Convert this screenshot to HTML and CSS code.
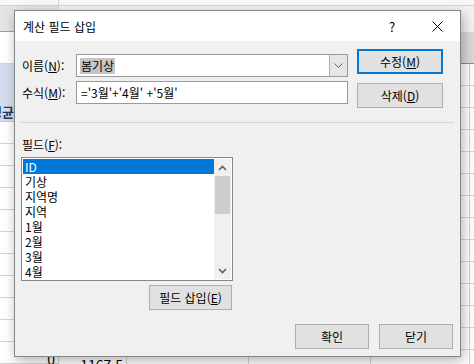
FILE: index.html
```html
<!DOCTYPE html>
<html lang="ko">
<head>
  <meta charset="UTF-8">
  <title>계산 필드 삽입</title>
  <link rel="stylesheet" href="styles.css">
</head>
<body>
  <!-- 뒤쪽 시트 -->
  <div class="sheet">
    <div class="pane-left">
      <div class="hd0"></div>
      <div class="hd1"></div>
      <div class="hd2"></div>
      <div class="sel-head"><span>평균</span></div>
      <div class="row"></div>
      <div class="row"></div>
      <div class="row"></div>
      <div class="row"></div>
      <div class="row"></div>
      <div class="row"></div>
      <div class="row"></div>
      <div class="row"></div>
      <div class="row"></div>
      <div class="row"></div>
      <div class="row num">0</div>
    </div>
    <div class="pane-right">
      <div class="hd0"></div>
      <div class="hd1"></div>
      <div class="hd2"></div>
      <div class="row"></div>
      <div class="row"></div>
      <div class="row"></div>
      <div class="row"></div>
      <div class="row"></div>
      <div class="row"></div>
      <div class="row"></div>
      <div class="row"></div>
      <div class="row"></div>
      <div class="row"></div>
      <div class="row"></div>
      <div class="row"></div>
      <div class="row"></div>
      <div class="row"><span class="cell-num">1167.5</span></div>
    </div>
  </div>

  <!-- 대화상자 -->
  <div class="dialog">
    <div class="titlebar">
      <span class="title">계산 필드 삽입</span>
      <span class="help">?</span>
      <span class="close">
        <svg width="11" height="11" viewBox="0 0 11 11"><path d="M0.5 0.5 L10.5 10.5 M10.5 0.5 L0.5 10.5" stroke="#000" stroke-width="1" fill="none"/></svg>
      </span>
    </div>

    <div class="content">
      <div class="top">
        <div class="fields">
          <div class="field">
            <label>이름(<u>N</u>):</label>
            <div class="combo">
              <span class="combo-text"><span class="hl">봄기상</span></span>
              <span class="combo-btn">
                <svg width="9" height="5" viewBox="0 0 9 5"><path d="M0.5 0.5 L4.5 4.5 L8.5 0.5" stroke="#606060" stroke-width="1" fill="none"/></svg>
              </span>
            </div>
          </div>
          <div class="field">
            <label>수식(<u>M</u>):</label>
            <div class="textbox">='3월'+'4월' +'5월'</div>
          </div>
        </div>
        <div class="side-buttons">
          <button class="btn btn-focus">수정(<u>M</u>)</button>
          <button class="btn">삭제(<u>D</u>)</button>
        </div>
      </div>

      <div class="separator"></div>

      <div class="list-label">필드(<u>F</u>):</div>
      <div class="listbox">
        <div class="items">
          <div class="item selected">ID</div>
          <div class="item">기상</div>
          <div class="item">지역명</div>
          <div class="item">지역</div>
          <div class="item">1월</div>
          <div class="item">2월</div>
          <div class="item">3월</div>
          <div class="item">4월</div>
        </div>
        <div class="scrollbar">
          <div class="arrow">
            <svg width="9" height="6" viewBox="0 0 9 6"><path d="M1 5 L4.5 1.5 L8 5" stroke="#606060" stroke-width="1.6" fill="none"/></svg>
          </div>
          <div class="thumb"></div>
          <div class="track"></div>
          <div class="arrow">
            <svg width="9" height="6" viewBox="0 0 9 6"><path d="M1 1 L4.5 4.5 L8 1" stroke="#606060" stroke-width="1.6" fill="none"/></svg>
          </div>
        </div>
      </div>

      <button class="btn btn-insert">필드 삽입(<u>E</u>)</button>

      <div class="footer-buttons">
        <button class="btn btn-wide">확인</button>
        <button class="btn btn-wide">닫기</button>
      </div>
    </div>
  </div>
</body>
</html>
```

FILE: styles.css
```css
* {
  box-sizing: border-box;
}

body {
  margin: 0;
  width: 474px;
  height: 364px;
  overflow: hidden;
  position: relative;
  font-family: "Noto Sans CJK KR", "Noto Sans", sans-serif;
  font-size: 12px;
  color: #000;
  background-color: #fff;
}

/* 시트 배경 */
.sheet {
  display: flex;
  height: 364px;
}

.pane-left {
  width: 59px;
  flex: none;
  border-right: 1px solid #d4d4d4;
}

.pane-right {
  flex: 1;
  background-image:
    linear-gradient(to right, transparent 67px, #d4d4d4 67px, #d4d4d4 68px, transparent 68px),
    linear-gradient(to right, transparent 189px, #d4d4d4 189px, #d4d4d4 190px, transparent 190px),
    linear-gradient(to right, transparent 311px, #d4d4d4 311px, #d4d4d4 312px, transparent 312px),
    linear-gradient(to right, transparent 410px, #d4d4d4 410px, #d4d4d4 411px, transparent 411px);
}

.hd0 {
  height: 6px;
  background-color: #f7f7f7;
  border-bottom: 1px solid #d6d6d6;
}

.hd1 {
  height: 26px;
  background-color: #f3f3f3;
}

.pane-left .hd1 {
  background-color: #e4e4e4;
  border-bottom: 1px solid #9d9d9d;
}

.hd2 {
  height: 32px;
  background-color: #dadada;
  border-bottom: 1px solid #8c8c8c;
}

.pane-left .hd2 {
  background-color: #fff;
  border-bottom: 1px solid #d4d4d4;
}

.sel-head {
  height: 58px;
  background-color: #d6ddee;
  border-bottom: 1px solid #c4cbdc;
  display: flex;
  align-items: flex-end;
  padding-bottom: 1px;
  font-weight: bold;
  color: #1f3864;
  white-space: nowrap;
  overflow: hidden;
}

.sel-head span {
  margin-left: -10px;
  font-size: 13px;
  line-height: 16px;
}

.row {
  height: 22px;
  border-bottom: 1px solid #d4d4d4;
}

.num {
  text-align: right;
  padding: 8px 3px 0 0;
  font-size: 14px;
  line-height: 18px;
}

.cell-num {
  display: block;
  width: 67px;
  text-align: right;
  padding: 6px 3px 0 0;
  font-size: 14px;
  line-height: 18px;
}

/* 대화상자 */
.dialog {
  position: absolute;
  left: 14px;
  top: 10px;
  width: 447px;
  height: 347px;
  border: 1px solid #858585;
  background-color: #f0f0f0;
  box-shadow: 2px 4px 12px rgba(0, 0, 0, 0.3);
}

.titlebar {
  height: 30px;
  background-color: #fff;
  display: flex;
  align-items: center;
  padding-left: 8px;
}

.title {
  flex: 1;
  font-size: 12px;
}

.help {
  width: 46px;
  text-align: center;
  font-size: 13px;
}

.close {
  width: 45px;
  display: flex;
  justify-content: center;
  align-items: center;
}

.content {
  padding: 0 7px;
}

.top {
  display: flex;
  align-items: flex-start;
}

.fields {
  margin-top: 13px;
  display: flex;
  flex-direction: column;
  gap: 4px;
}

.field {
  display: flex;
  align-items: center;
}

.field label {
  width: 54px;
}

.combo,
.textbox {
  width: 272px;
  height: 23px;
  border: 1px solid #9a9a9a;
  background-color: #fff;
}

.combo {
  display: flex;
}

.combo-text {
  flex: 1;
  display: flex;
  align-items: center;
  padding-left: 3px;
}

.hl {
  background-color: #c6c6c6;
  padding: 0 1px;
  line-height: 16px;
}

.combo-btn {
  width: 18px;
  background-color: #e6e6e6;
  border-left: 1px solid #adadad;
  display: flex;
  align-items: center;
  justify-content: center;
}

.textbox {
  padding-left: 4px;
  line-height: 21px;
}

.side-buttons {
  margin-top: 8px;
  margin-left: 9px;
  display: flex;
  flex-direction: column;
  gap: 9px;
}

.btn {
  font-family: inherit;
  font-size: 12px;
  color: #000;
  background-color: #e1e1e1;
  border: 1px solid #adadad;
  padding: 0;
  height: 25px;
  width: 86px;
}

.btn-focus {
  border: 2px solid #0078d7;
}

.separator {
  margin: 14px 0 0 -1px;
  width: 433px;
  height: 1px;
  background-color: #d5d5d5;
}

.list-label {
  margin-top: 14px;
  line-height: 15px;
}

.listbox {
  margin: 5px 0 0 -1px;
  width: 212px;
  height: 124px;
  border: 1px solid #828790;
  background-color: #fff;
  padding: 1px;
  display: flex;
}

.items {
  flex: 1;
}

.item {
  height: 15px;
  line-height: 15px;
  padding-left: 2px;
}

.item.selected {
  background-color: #0078d7;
  color: #fff;
}

.scrollbar {
  width: 17px;
  background-color: #f0f0f0;
  display: flex;
  flex-direction: column;
}

.arrow {
  height: 17px;
  display: flex;
  align-items: center;
  justify-content: center;
}

.thumb {
  height: 38px;
  margin: 0 1px;
  background-color: #cdcdcd;
}

.track {
  flex: 1;
}

.btn-insert {
  display: block;
  margin: 4px 0 0 127px;
  width: 83px;
}

.footer-buttons {
  margin-top: 14px;
  display: flex;
  justify-content: flex-end;
  gap: 10px;
}

.btn-wide {
  width: 74px;
}
```
